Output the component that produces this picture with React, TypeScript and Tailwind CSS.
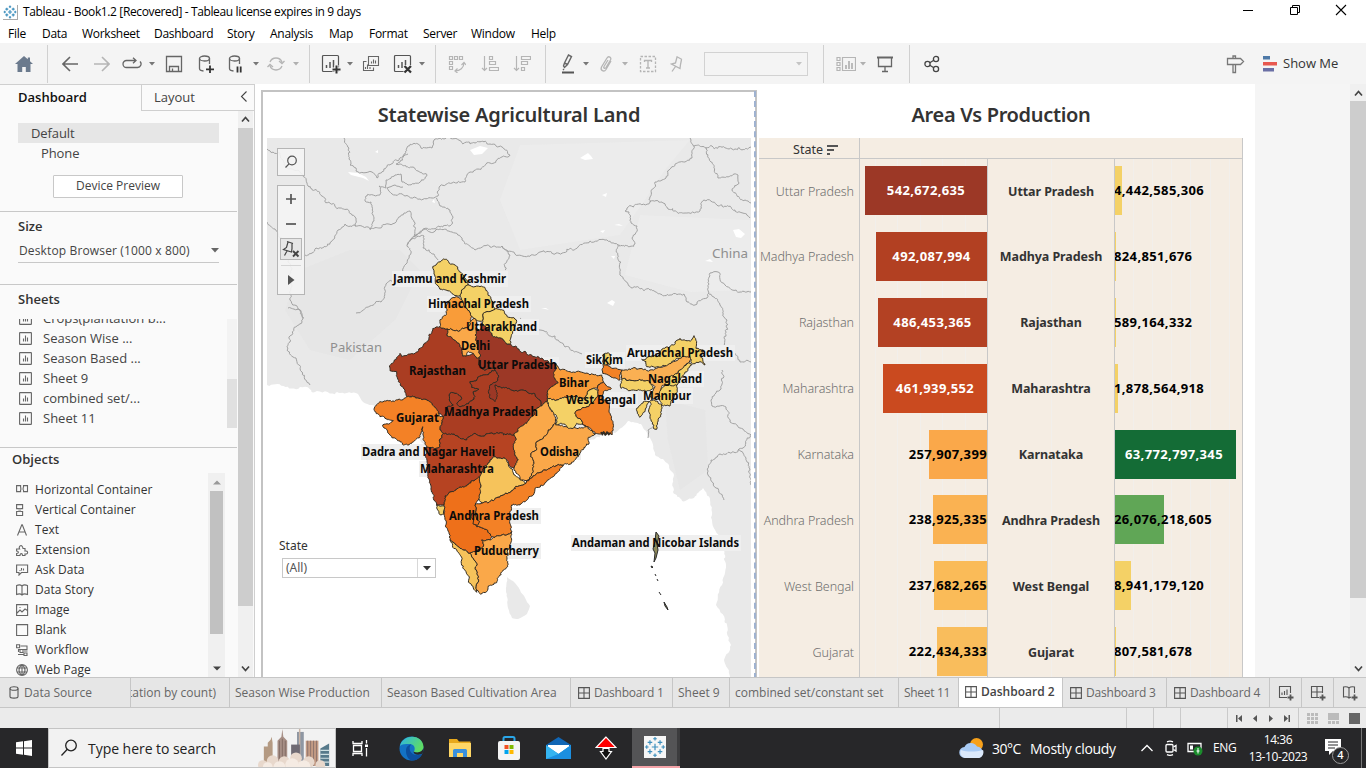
import React from "react";

/* ---------- map geometry ---------- */
type Pt = [number, number];

const parse = (s: string): Pt[] => s.trim().split(/\s+/).map((p) => p.split(",").map(Number) as Pt);

const hash = (a: Pt, b: Pt) => {
  const v = Math.sin((a[0] + b[0]) * 12.9898 + (a[1] + b[1]) * 78.233) * 43758.5453;
  return (v - Math.floor(v)) * 2 - 1;
};

// Midpoint displacement; the hash is symmetric so neighbours share their borders.
// The factor grows with depth, which keeps long edges in place and small ones jagged.
const split = (a: Pt, b: Pt, min: number, k: number, depth = 0): Pt[] => {
  const dx = b[0] - a[0];
  const dy = b[1] - a[1];
  if (depth > 6 || Math.hypot(dx, dy) < min) return [b];
  const flip = a[0] + a[1] * 0.37 > b[0] + b[1] * 0.37 ? -1 : 1;
  const h = hash(a, b) * k * flip;
  const m: Pt = [(a[0] + b[0]) / 2 - dy * h, (a[1] + b[1]) / 2 + dx * h];
  const next = Math.min(k * 1.6, 0.32);
  return [...split(a, m, min, next, depth + 1), ...split(m, b, min, next, depth + 1)];
};

const rough = (s: string, closed = true, min = 6, k = 0.22) => {
  const pts = parse(s);
  const out: Pt[] = [pts[0]];
  const n = closed ? pts.length : pts.length - 1;
  for (let i = 0; i < n; i++) out.push(...split(pts[i], pts[(i + 1) % pts.length], min, k));
  return "M" + out.map((p) => p[0].toFixed(1) + " " + p[1].toFixed(1)).join("L") + (closed ? "Z" : "");
};

const states: [string, string][] = [
  ["#aa3d22", "218,236 240,230 262,237 262,258 275,262 290,275 305,300 308,318 318,318 340,310 358,322 356,345 370,358 405,360 370,375 330,395 335,412 357,418 340,425 345,440 325,462 300,470 290,460 305,445 290,430 270,430 268,450 280,465 262,470 258,490 250,500 235,490 225,472 205,452 190,448 165,440 140,440 135,420 115,395 110,365 90,362 88,348 105,330 120,310 125,320 145,312 165,310 190,285 215,250"],
  ["#aa3d22", "405,360 415,375 410,395 405,405 430,412 455,420 490,420 520,430 540,450 545,468 530,475 515,500 500,520 475,535 462,555 430,555 390,550 360,558 345,550 320,570 300,565 275,552 250,550 240,530 250,500 258,490 262,470 280,465 268,450 270,430 290,430 305,445 290,460 300,470 325,462 345,440 340,425 357,418 335,412 330,395 370,375"],
  ["#9c3826", "358,240 368,225 385,240 400,260 425,265 440,282 470,290 515,315 550,328 585,340 587,365 585,385 595,398 575,410 562,428 562,455 545,468 540,450 520,430 490,420 455,420 430,412 405,405 412,430 405,455 390,445 385,425 390,405 410,395 415,375 405,360 370,358 356,345 358,322 362,318 350,275 348,235"],
  ["#f4d166", "250,27 262,30 268,40 285,45 298,65 312,78 325,105 305,120 300,138 285,137 268,122 240,118 226,100 222,72 218,50 236,36"],
  ["#f4d166", "325,105 345,110 365,108 382,125 395,150 405,178 385,185 370,190 368,212 352,212 335,200 318,175 305,150 300,138 305,120"],
  ["#f4d166", "405,178 430,180 440,195 470,215 458,250 452,280 440,282 425,265 400,260 385,240 368,225 368,212 370,190 385,185"],
  ["#f99c39", "290,140 305,150 318,175 335,200 332,212 325,235 300,242 262,237 240,230 240,215 262,180 258,170 270,150"],
  ["#faa849", "262,237 300,242 325,235 332,212 345,205 350,215 348,235 350,275 362,318 350,325 340,310 325,305 318,318 308,318 305,300 290,275 275,262 262,258"],
  ["#f38126", "140,440 165,440 190,448 205,452 225,472 240,500 250,500 240,530 250,550 238,570 240,590 228,595 200,595 195,580 188,530 180,560 155,580 130,585 90,555 68,525 100,512 85,508 60,500 42,478 45,470 60,455 95,455 125,450"],
  ["#b64322", "250,550 275,552 300,565 320,570 345,550 360,558 390,550 430,555 462,555 468,565 460,590 465,615 475,630 468,640 462,655 450,650 445,635 440,630 402,620 390,630 385,640 372,655 365,668 358,685 345,690 320,708 295,715 280,725 255,738 252,765 230,765 220,745 210,700 203,650 198,595 228,595 240,590 238,570"],
  ["#ee701a", "252,765 255,738 280,725 295,715 320,708 345,690 358,680 362,700 358,745 345,765 348,790 340,810 350,830 370,835 395,860 390,870 365,870 370,890 345,905 330,910 300,895 285,882 270,870 262,835 252,792"],
  ["#f3cf66", "230,765 252,768 252,792 243,795"],
  ["#f6c35b", "390,630 402,620 440,630 447,650 465,675 485,690 498,700 460,718 430,735 400,752 365,760 358,735 358,690 365,668"],
  ["#faa849", "500,520 515,500 530,475 545,468 562,455 585,500 585,520 565,540 550,565 530,575 530,595 512,620 522,640 520,665 500,692 480,690 462,655 468,640 475,630 465,615 460,590 468,565 462,555 475,535"],
  ["#faa849", "585,520 610,530 650,535 680,528 705,552 685,562 687,582 655,620 610,645 580,648 555,660 530,670 500,692 520,665 522,640 512,620 530,595 530,575 550,565 565,540"],
  ["#f38126", "345,765 365,760 400,752 430,735 460,718 498,700 500,692 530,670 555,660 580,648 610,645 590,670 560,695 525,715 520,735 490,755 480,765 455,765 450,785 450,810 455,845 440,855 405,862 395,860 370,835 350,830 340,810 348,790"],
  ["#faa849", "455,845 440,855 405,862 390,870 365,870 370,890 345,905 330,910 340,925 350,940 345,955 355,980 350,1020 362,1033 380,1025 385,1008 410,998 412,985 430,960 443,950 440,920 452,880"],
  ["#f6c35b", "270,870 285,882 300,895 330,910 340,925 350,940 345,955 355,980 350,1020 350,1027 330,1000 318,965 305,930 290,900"],
  ["#f99c39", "585,340 600,360 630,365 670,368 690,375 725,375 730,395 712,415 700,415 670,445 630,440 600,445 562,445 562,428 575,410 595,398 585,385"],
  ["#f4d166", "562,445 600,445 630,440 670,445 700,415 715,420 712,440 695,460 665,475 645,490 655,505 680,530 650,520 640,535 625,535 610,522 587,525 590,500 575,480"],
  ["#f38126", "645,490 665,475 695,460 712,440 715,420 712,415 730,395 740,408 754,415 730,425 725,445 745,460 750,490 755,510 756,555 746,548 740,553 730,545 722,552 705,552 680,530 655,505"],
  ["#f38126", "730,340 755,355 785,360 780,390 750,378 728,370"],
  ["#f4d166", "728,315 745,308 752,325 750,345 732,345"],
  ["#fab053", "785,360 830,358 870,360 910,350 940,335 980,315 995,325 985,340 960,360 940,380 925,390 905,410 900,435 885,445 870,440 885,410 870,395 865,392 830,392 785,388"],
  ["#f4d166", "785,388 830,392 865,392 880,415 865,422 820,420 783,415"],
  ["#f4d166", "845,328 890,320 910,295 940,285 960,265 995,270 1002,257 1010,275 1008,295 1030,300 1020,315 1035,345 1020,335 995,340 990,320 960,325 935,335 900,352 860,350 858,335"],
  ["#f4d166", "990,340 995,345 970,375 950,405 920,415 915,405 930,380 960,360"],
  ["#f4d166", "915,405 950,405 952,425 935,450 930,468 905,465 898,435 905,415"],
  ["#f4d166", "868,455 880,450 905,465 902,500 890,538 880,535 870,500"],
  ["#f4d166", "830,475 850,455 868,455 860,470 855,485 840,502 832,490"],
];

const coast = "267,385 300,387 340,393 358,394 363,402 372,405 420,440 450,470 500,440 560,425 590,440 615,433 628,421 641,424 650,438 655,455 667,463 674,475 673,492 682,501 694,498 703,488 710,500 712,520 720,540 726,565 722,585 716,605 727,625 731,645 724,660 730,677";

// Neighbouring countries' and provinces' borders.
const borders = [
  "344,138 349,148 350,165 356,168 356,171 372,172 377,178 390,165 404,154 408,146 418,144 432,148 434,140 444,139 470,144 490,144 502,147 510,155",
  "510,155 490,163 470,172 465,182 452,183 440,186 438,196 432,198 420,199 405,196 392,194 387,188 395,185 403,187",
  "408,154 400,162 396,164 413,167 418,171 427,175 420,182 408,185 402,182 401,174 395,175 386,180 386,188 379,186 381,193 366,196 365,201 371,202 373,215 374,221 370,230",
  "303,175 308,186 322,196 340,208 356,218 355,226 370,229 380,228 395,223 404,213 410,211 414,222 414,237 423,229 440,227 450,226 453,217 450,210 440,206 436,198",
  "303,256 312,253 316,248 331,242 338,230 345,224 356,226",
  "267,149 280,153 284,165 298,170 304,176",
  "267,222 275,229 284,240 288,262 290,300 300,310 304,318",
  "288,308 300,310 302,322 290,342 287,350 296,358 302,372 310,385",
  "356,313 370,306 381,302 385,290 386,284 398,278 406,264 411,253 407,245 413,237 425,229 430,232 440,229 452,232 462,240 475,250 490,247 502,246 510,255 505,270",
  "407,245 413,238 424,236 423,248 434,254 438,260",
  "502,246 515,254 528,256 540,252 556,253 578,247 590,241 605,240 618,245 635,244 632,238 637,226 631,223 629,212 625,211 650,202 655,182 666,178 671,168 680,162 692,158 694,146 690,138",
  "650,202 662,202 668,209 685,213 700,211 704,200 717,205 735,210 750,218",
  "694,146 712,146 735,149 751,147",
  "706,147 711,162 718,178 738,175 739,183 732,190 745,200 751,203",
  "618,245 621,262 620,273 628,284 650,290 670,295 684,294 687,302 695,305 707,298 709,284 710,273 718,272 725,285 740,292 751,292",
  "709,294 720,305 727,320 724,338 725,350 734,352 740,362 751,362",
  "520,318 540,330 555,336 565,347 582,354",
  "722,370 720,390 711,400 712,406 726,407 730,422 740,428 751,435",
  "751,434 738,450 720,454 711,460 708,475 716,488 724,500",
  "738,450 746,458 749,468 751,485",
  "648,438 648,430 652,428",
];

const lakes = "M470,150l10,-4 8,2 -6,6 -8,1zM348,172l10,1 8,4 3,4 -6,-3 -12,-3zM580,158l8,-5 3,3 2,3 -8,1zM733,230l6,-1 6,5 -4,4 -5,-1zM602,195l5,-2 -1,4zM614,225l5,-1 4,2zM600,231l5,-1 -2,3zM705,261l5,-2 3,3zM607,303l5,-3 3,2 -2,4zM541,308l5,0 3,2zM432,202l2,-3 1,4zM375,152l3,-2 0,3zM611,256l4,0 -1,3z";

const mapLabels: [string, number, number, number][] = [
  ["Jammu and Kashmir", 393, 279, 113],
  ["Himachal Pradesh", 428, 304, 101],
  ["Uttarakhand", 466, 327, 71],
  ["Delhi", 461, 346, 29],
  ["Uttar Pradesh", 478, 365, 79],
  ["Rajasthan", 409, 371, 57],
  ["Madhya Pradesh", 444, 412, 94],
  ["Gujarat", 396, 418, 43],
  ["Bihar", 559, 383, 30],
  ["West Bengal", 566, 400, 70],
  ["Sikkim", 586, 360, 37],
  ["Arunachal Pradesh", 627, 353, 106],
  ["Nagaland", 648, 379, 54],
  ["Manipur", 643, 396, 48],
  ["Odisha", 540, 452, 39],
  ["Dadra and Nagar Haveli", 362, 452, 133],
  ["Maharashtra", 420, 469, 74],
  ["Andhra Pradesh", 449, 516, 90],
  ["Puducherry", 474, 551, 65],
  ["Andaman and Nicobar Islands", 572, 543, 167],
];

function IndiaMap() {
  return (
    <svg width="484" height="539" viewBox="267 138 484 539" className="block">
      <rect x="267" y="138" width="484" height="539" fill="#fff" />
      <g fill="#e9e9e9">
        <path d={rough(coast, false, 3, 0.08) + "L760 677 760 130 260 130 260 385Z"} />
        <path d={rough("507,577 513,581 520,590 530,606 527,614 518,619 512,618 508,608 506,592", true, 3, 0.05)} />
      </g>
      <g fill="#e3e3e3" opacity=".45">
        <path d="M300,270L350,250 400,250 420,270 395,320 350,360 310,350 285,310z" />
        <path d="M665,400L705,410 708,470 680,490 668,440z" />
      </g>
      <g fill="#eeeeee" opacity=".6">
        <path d="M520,145L690,140 665,170 645,200 620,235 520,250 500,200z" />
        <path d="M640,215L750,220 751,290 690,292 625,275z" />
      </g>
      <path d={lakes} fill="#fff" />
      <g fill="none" stroke="#a2a2a2" strokeWidth="1">
        {borders.map((b) => (
          <path key={b} d={rough(b, false, 2.2, 0.12)} />
        ))}
      </g>
      <g fill="#efefef">
        {mapLabels.map(([t, x, y, w]) => (
          <rect key={t} x={x - 1} y={y - 8} width={w + 3} height="16" />
        ))}
      </g>
      <g transform="translate(360 250) scale(.33333)" stroke="#332c22" strokeWidth="3" strokeLinejoin="round">
        {states.map(([fill, pts]) => (
          <path key={pts} d={rough(pts, true, 6, 0.12)} fill={fill} />
        ))}
        <path d="M335,790l12,6 4,14 8,4 -6,12 -14,-4 2,-12 -8,-8z" fill="#ee701a" />
        <path d="M723,546l4,8 4,-8 5,9 5,-9 5,8 6,-6" fill="none" strokeWidth="5" />
      </g>
      <g stroke="#2a2a2a" strokeWidth="1" fill="#8f8a5a">
        <path d="M656,532l3,4 -2,8 1,6 -2,8 -2,4 1,-9 -2,-4 2,-8z" />
        <path d="M651,566l2,1 -1,1zM655,574l1,2M657,579l1,2M659,592l2,3M664,602l3,5 1,3 -3,-4z" />
      </g>
      <g fontFamily="'Noto Sans','Open Sans',sans-serif" fontSize="13" fill="#8f8f8f">
        <text x="712" y="258" textLength="36" lengthAdjust="spacingAndGlyphs">China</text>
        <text x="330" y="352" textLength="52" lengthAdjust="spacingAndGlyphs">Pakistan</text>
      </g>
      <g fontFamily="'Noto Sans','Open Sans',sans-serif" fontSize="11.500" fontWeight="700" fill="#0b0b0b">
        {mapLabels.map(([t, x, y, w]) => (
          <text key={t} x={x} y={y + 4} textLength={w} lengthAdjust="spacingAndGlyphs">{t}</text>
        ))}
      </g>
    </svg>
  );
}

/* ---------- icons ---------- */
function Ico({ children, c = "#666", w = 20, h = 20, sw = 1.3 }: { children: React.ReactNode; c?: string; w?: number; h?: number; sw?: number }) {
  return (
    <svg width={w} height={h} viewBox={`0 0 ${w} ${h}`} fill="none" stroke={c} strokeWidth={sw} className="block shrink-0">
      {children}
    </svg>
  );
}

const Caret = ({ c = "#777" }: { c?: string }) => (
  <svg width="6" height="4" viewBox="0 0 6 4" className="block shrink-0"><path d="M0 0h6L3 3.5z" fill={c} /></svg>
);

const Slot = ({ cls, children }: { cls: string; children: React.ReactNode }) => (
  <div className={"flex h-full shrink-0 items-center justify-center " + cls}>{children}</div>
);

const Sep = ({ cls = "" }: { cls?: string }) => <div className={"h-[38px] w-px shrink-0 bg-[#d0d0d0] " + cls} />;

const Bars = ({ c }: { c: string }) => (
  <>
    <rect x="2.5" y="1.5" width="16" height="16" rx="1" stroke={c} strokeWidth="1.2" />
    <path d="M6.5 14v-3M10 14V8M13.5 14V6" stroke={c} strokeWidth="1.5" />
  </>
);

function Toolbar() {
  const g = "#b5b5b5";
  return (
    <div className="flex h-[41px] shrink-0 items-center bg-[#f4f4f4]">
      <Slot cls="w-[47px]">
        <svg width="18" height="16" viewBox="0 0 18 16"><path d="M9 0 0 8h2.5v8h4.7v-5h3.6v5h4.7V8H18l-3-2.7V1.5h-2.2v1.8z" fill="#6b7a8d" /></svg>
      </Slot>
      <Sep />
      <Slot cls="ml-[6px] w-[32px]"><Ico w={16} h={16} sw={1.6}><path d="M8 1 1 8l7 7M1 8h15" /></Ico></Slot>
      <Slot cls="w-[32px]"><Ico w={16} h={16} sw={1.6} c={g}><path d="M8 1l7 7-7 7M15 8H0" /></Ico></Slot>
      <Slot cls="w-[28px]"><Ico w={20} h={14}><path d="M13.500 3.500h-9a3.500 3.500 0 0 0 0 7h11a3.500 3.500 0 0 0 2.500-6M11 .8l3 2.700-3 2.700" /></Ico></Slot>
      <Slot cls="w-[12px]"><Caret /></Slot>
      <Slot cls="w-[32px]"><Ico w={18} h={18}><path d="M1.500 1.500h15v15h-15zM4.500 16.500v-5h9v5M7.500 13.500v2.500" /></Ico></Slot>
      <Slot cls="w-[32px]"><Ico w={18} h={18}><ellipse cx="7.500" cy="3.500" rx="5" ry="2.500" /><path d="M2.500 3.500v10c0 1.300 2 2.300 4 2.500M12.500 3.500V9" /><path d="M13 10.500v7.500M9 14.300h8" stroke="#333" strokeWidth="1.800" /></Ico></Slot>
      <Slot cls="w-[28px]"><Ico w={18} h={18}><ellipse cx="7.500" cy="3.500" rx="5" ry="2.500" /><path d="M2.500 3.500v10c0 1.300 2 2.300 4 2.500M12.500 3.500V9" /><path d="M10.500 11.500v6M13.700 11.500v6" stroke="#333" strokeWidth="1.800" /></Ico></Slot>
      <Slot cls="w-[12px]"><Caret /></Slot>
      <Slot cls="w-[28px]"><Ico w={18} h={16} c={g}><path d="M3 6a6.500 6.500 0 0 1 12 0M15 10a6.500 6.500 0 0 1-12 0M0.500 11l2.500-2.500L6 11M12 5l3 2.500 2.500-2.500" /></Ico></Slot>
      <Slot cls="w-[12px]"><Caret c="#b0b0b0" /></Slot>
      <Sep cls="ml-[7px]" />
      <Slot cls="ml-[6px] w-[28px]"><Ico w={21} h={20}><Bars c="#555" /><path d="M16.500 11v9M12 15.500h9" stroke="#f4f4f4" strokeWidth="4" /><path d="M16.500 11.500v8M12.500 15.500h8" stroke="#333" strokeWidth="2" /></Ico></Slot>
      <Slot cls="w-[12px]"><Caret /></Slot>
      <Slot cls="w-[30px]"><Ico w={18} h={18}><path d="M6.500 1.500h10v9h-10zM9.500 8.500v-2M11.500 8.500v-4M13.500 8.500v-3M4.500 6.500h-3v9h10v-3M3.500 14v-2M5.500 14V9.500M8 14v-2" strokeWidth="1.100" /></Ico></Slot>
      <Slot cls="ml-[2px] w-[28px]"><Ico w={21} h={20}><Bars c="#555" /><path d="M11.500 11h9v8h-9z" fill="#f4f4f4" stroke="none" /><path d="m12.500 12 6.500 6.500M19 12l-6.500 6.500" stroke="#333" strokeWidth="2.200" /></Ico></Slot>
      <Slot cls="w-[12px]"><Caret /></Slot>
      <Sep cls="ml-[7px]" />
      <Slot cls="ml-[5px] w-[32px]"><Ico w={18} h={18} c={g}><path d="M1.500 1.500h3v3h-3zM6.500 1.500h3v3h-3zM11.500 1.500h3v3h-3zM1.500 6.500h3v3h-3zM1.500 11.500h3v3h-3zM7 16c5 0 9-3 9-8.500M9.500 13.500L7 16l2.500 2M13.500 10L16 7.500l2 2.500" strokeWidth="1.200" /></Ico></Slot>
      <Slot cls="w-[33px]"><Ico w={18} h={18} c={g}><path d="M3.500 1v14M1 13l2.500 2.500L6 13M8.500 1.500h3v3h-3zM8.500 6.500h6v3h-6zM8.500 12.500h9v3h-9z" strokeWidth="1.200" /></Ico></Slot>
      <Slot cls="w-[32px]"><Ico w={18} h={18} c={g}><path d="M3.500 1v14M1 13l2.500 2.500L6 13M8.500 1.500h9v3h-9zM8.500 6.500h6v3h-6zM8.500 12.500h3v3h-3z" strokeWidth="1.200" /></Ico></Slot>
      <Sep cls="ml-[7px]" />
      <Slot cls="ml-[8px] w-[28px]"><Ico w={14} h={20}><path d="m2.500 12 1-3 4-8 3 1.500-4 8-3 3zM3.500 9l3 1.500M3 15l-1 1" strokeWidth="1.400" /><path d="M1 18.500h12" stroke="#555" strokeWidth="2" /></Ico></Slot>
      <Slot cls="w-[8px]"><Caret /></Slot>
      <Slot cls="w-[31px]"><Ico w={14} h={18} c={g}><path d="M12 6 7 14.500C5 17.500 1 15.500 2.500 12L8 3c1.500-2.500 5-.5 3.500 2L7 12.500c-1 1.500-3 .5-2-1L9 5" /></Ico></Slot>
      <Slot cls="w-[8px]"><Caret c="#b0b0b0" /></Slot>
      <Slot cls="w-[37px]"><Ico w={18} h={18} c={g}><path d="M1.500 1.500h15v15h-15z" strokeDasharray="2.500 1.500" /><path d="M5.500 7V5.500h7V7M9 5.500v7.500M7 13h4" /></Ico></Slot>
      <Slot cls="w-[22px]"><Ico w={14} h={18} c={g}><path d="M6.500 1.500 12 4.500M7 2 5.500 8 1.500 9l8.500 4.500.5-4L11.500 4.500M5.500 11.500 2 16.500" /></Ico></Slot>
      <div className="ml-[16px] flex h-[24px] w-[104px] items-center justify-end border border-[#d2d2d2] pr-[5px]"><Caret c="#c4c4c4" /></div>
      <Sep cls="ml-[15px]" />
      <Slot cls="ml-[9px] w-[26px]"><Ico w={20} h={16} c={g}><path d="M1 1.500h3v3H1zM1 6.500h3v3H1zM1 11.500h3v3H1zM6.500 1.500h13v13h-13z" strokeWidth="1.200" /><path d="M10 13v-4M13 13V5M16 13V7" strokeWidth="1.800" /></Ico></Slot>
      <Slot cls="w-[8px]"><Caret c="#b0b0b0" /></Slot>
      <Slot cls="w-[36px]"><Ico w={18} h={18}><path d="M1 2.500h16" strokeWidth="2" /><path d="M2.500 3v8.500h13V3M9 11.500V16M6 16.500h6" /></Ico></Slot>
      <Sep cls="ml-[6px]" />
      <Slot cls="ml-[6px] w-[32px]"><Ico w={16} h={18} c="#444" sw={1.300}><circle cx="3.500" cy="9" r="2.600" /><circle cx="12" cy="4" r="2.600" /><circle cx="12" cy="14" r="2.600" /><path d="m5.800 7.700 4-2.400M5.800 10.300l4 2.400" /></Ico></Slot>
      <div className="ml-auto flex h-full items-center pr-[28px]">
        <Ico w={20} h={20} c="#777"><path d="M2.500 4.500h13l3 3-3 3h-13zM8 4V2h2.500v2M8 11v7.500h2.500V11" /></Ico>
        <svg width="15" height="16" viewBox="0 0 15 16" className="ml-[17px]"><path d="M1 0h7v3.500H1z" fill="#4e79a7" /><path d="M1 6h14v3.500H1z" fill="#e8584f" /><path d="M1 12h11v3.500H1z" fill="#6a6fa5" /></svg>
        <span className="ml-[6px] w-[55px] text-[13px] whitespace-nowrap text-[#333]">Show Me</span>
      </div>
    </div>
  );
}

/* ---------- left panel ---------- */
const SheetIcon = () => (
  <Ico w={13} h={13} c="#666" sw={1.100}><rect x=".6" y=".6" width="11.800" height="11.800" rx=".5" /><path d="M4.500 9.500v-3M6.500 9.500v-6M8.500 9.500v-4" /></Ico>
);

const objects: [string, React.ReactNode][] = [
  ["Horizontal Container", <><path d="M.6 1.600h4v6h-4zM7.500 1.600h4v6h-4z" /><path d="M4.600 3.500h3v2.500h-3z" fill="#bbb" stroke="none" /></>],
  ["Vertical Container", <><path d="M.6 .6h6v4h-6zM.6 7.500h6v4h-6z" /><path d="M2.300 4.800h2.700v2.400H2.300z" fill="#bbb" stroke="none" /></>],
  ["Text", <path d="M1.500 11.500 5.800.8h.5l4.200 10.700M3 8h6" />],
  ["Extension", <path d="M.6 5h3C2 2 6.500-.5 7 4.500h2V7c3.500-.5 3.500 3.500 0 3v1.500H6.500C6.500 9 4 9 4 11.500H.6V9.500C3 9.500 3 7 .6 7z" />],
  ["Ask Data", <path d="M.6 1h11v7.500H5.500L3 11V8.500H.6zM3.500 6.500h1M5.500 6.500V4M7.500 6.500v-2" />],
  ["Data Story", <path d="M.6 1.500C3 .5 5 1 6 2c1-1 3-1.500 5.500-.5v9C9 9.500 7 10 6 11c-1-1-3-1.500-5.400-.5zM6 2v9" />],
  ["Image", <path d="M.6 .6h11v11H.6zM1 9l3-3 2 2 3-3 2.500 1.500M3.500 3.500h1" />],
  ["Blank", <path d="M.6 .6h11v11H.6z" />],
  ["Workflow", <path d="M4.500 2h7M.6.8h3v3h-3zM11 2v3.500H2.500V8M4 5.500h3v3H4zM8 7h3.500M2 10.500h3M8 9h3v2.500H8zM5 10.500h3" />],
  ["Web Page", <path d="M6 .6a5.400 5.400 0 1 0 0 10.800A5.400 5.400 0 0 0 6 .6zM6 .6c-4 3-4 8 0 10.800M6 .6c4 3 4 8 0 10.800M1 4h10M1 8h10M6 .6v10.800" />],
];

function SidePanel() {
  return (
    <div className="flex h-full w-[255px] shrink-0 flex-col border-t border-r border-[#cfcfcf] bg-[#fafafa] text-[#444]">
      <div className="flex h-[26px] shrink-0">
        <div className="w-[141px] pt-[3px] pl-[18px] text-[13px] leading-[19px] font-semibold text-[#111]">Dashboard</div>
        <div className="flex flex-1 justify-between border-b border-l border-[#cfcfcf] pr-[6px] pl-[12px] text-[13px] leading-[24px]">
          Layout
          <Ico w={8} h={24} c="#444" sw={1.100}><path d="M6.500 6.500 1.500 11.500l5 5" /></Ico>
        </div>
      </div>
      <div className="flex min-h-0 flex-1">
        <div className="flex w-[238px] flex-col overflow-hidden pr-px">
          <div className="h-[101px] shrink-0 border-b border-[#c8c8c8] pt-[12px] pl-[18px] text-[13px] leading-[20px] tracking-[-0.1px]">
            <div className="w-[201px] bg-[#e6e6e6] pl-[13px]">Default</div>
            <div className="pl-[23px]">Phone</div>
            <div className="mt-[12px] ml-[35px] h-[23px] w-[130px] rounded-[1px] border border-[#c8c8c8] bg-white text-center text-[12px] leading-[20px] tracking-normal">Device Preview</div>
          </div>
          <div className="h-[73px] shrink-0 border-b border-[#c8c8c8] pl-[18px]">
            <div className="pt-[5px] text-[13px] leading-[19px] font-semibold text-[#333]">Size</div>
            <div className="mt-[3px] flex h-[24px] w-[201px] items-center justify-between border-b border-[#c8c8c8] text-[12px]">
              <span className="pl-px tracking-[0.14px]">Desktop Browser (1000 x 800)</span>
              <svg width="8" height="5" viewBox="0 0 8 5"><path d="M0 0h8L4 4.500z" fill="#666" /></svg>
            </div>
          </div>
          <div className="h-[163px] shrink-0 border-b border-[#c8c8c8]">
            <div className="h-[34px] pt-[5px] pl-[18px] text-[13px] leading-[19px] font-semibold text-[#333]">Sheets</div>
            <div className="flex h-[109px] justify-between overflow-hidden">
              <div className="-mt-[11px] text-[13px] leading-[20px]">
                {["Crops(plantation b...", "Season Wise ...", "Season Based ...", "Sheet 9", "combined set/...", "Sheet 11"].map((s) => (
                  <div key={s} className="flex h-[20px] items-center gap-[11px] pl-[19px]"><SheetIcon />{s}</div>
                ))}
              </div>
              <div className="w-[10px] bg-[#f3f3f3] pt-[60px]"><div className="h-[49px] bg-[#e0e0e0]" /></div>
            </div>
          </div>
          <div className="pt-[2px] pl-[12px] text-[13px] leading-[19px] font-semibold text-[#333]">Objects</div>
          <div className="mt-[4px] flex min-h-0 flex-1 justify-between overflow-hidden pr-[12px]">
            <div className="pt-[7px] text-[12px] leading-[20px] text-[#333]">
              {objects.map(([s, icon]) => (
                <div key={s} className="flex h-[20px] items-center gap-[6px] pl-[16px] tracking-[0.05px]">
                  <Ico w={13} h={12} c="#666" sw={1.100}>{icon}</Ico>{s}
                </div>
              ))}
            </div>
            <div className="flex w-[17px] flex-col items-center justify-between bg-[#f0f0f0] pt-[7px] pb-[6px]">
              <svg width="8" height="5" viewBox="0 0 8 5"><path d="M0 4.500h8L4 .5z" fill="#999" /></svg>
              <div className="mb-[27px] h-[143px] w-[13px] bg-[#c1c1c1]" />
              <svg width="8" height="5" viewBox="0 0 8 5"><path d="M0 .5h8L4 4.500z" fill="#444" /></svg>
            </div>
          </div>
        </div>
        <div className="flex w-[15px] flex-col items-center bg-[#f0f0f0]">
          <div className="flex h-[17px] items-center"><Ico w={9} h={7} c="#444" sw={1.700}><path d="m1 5.500 3.500-4 3.500 4" /></Ico></div>
          <div className="h-[478px] w-full bg-[#cdcdcd]" />
          <div className="mt-auto flex h-[17px] items-center"><Ico w={9} h={7} c="#444" sw={1.700}><path d="m1 1.500 3.500 4 3.500-4" /></Ico></div>
        </div>
      </div>
    </div>
  );
}

/* ---------- area vs production ---------- */
type Row = { n: string; a: string; aw: number; ac: string; p: string; pw: number; pc: string };
const rows: Row[] = [
  { n: "Uttar Pradesh", a: "542,672,635", aw: 122, ac: "#9c3826", p: "4,442,585,306", pw: 7, pc: "#f4d166" },
  { n: "Madhya Pradesh", a: "492,087,994", aw: 111, ac: "#b24022", p: "824,851,676", pw: 1, pc: "#f4d166" },
  { n: "Rajasthan", a: "486,453,365", aw: 109, ac: "#b34123", p: "589,164,332", pw: 1, pc: "#f4d166" },
  { n: "Maharashtra", a: "461,939,552", aw: 104, ac: "#ca4a1f", p: "1,878,564,918", pw: 3, pc: "#f4d166" },
  { n: "Karnataka", a: "257,907,399", aw: 58, ac: "#faa84a", p: "63,772,797,345", pw: 121, pc: "#146c36" },
  { n: "Andhra Pradesh", a: "238,925,335", aw: 54, ac: "#fab252", p: "26,076,218,605", pw: 49, pc: "#60a656" },
  { n: "West Bengal", a: "237,682,265", aw: 53, ac: "#fabb58", p: "8,941,179,120", pw: 16, pc: "#f4d166" },
  { n: "Gujarat", a: "222,434,333", aw: 50, ac: "#f9bd5c", p: "807,581,678", pw: 1, pc: "#f4d166" },
];

const Grid = ({ xs }: { xs: number[] }) => (
  <svg className="absolute inset-0" width="128" height="519"><path d={xs.map((x) => `M${x} 0V519`).join("")} stroke="#f2efeb" strokeWidth="1" /></svg>
);

function AreaChart() {
  const num = "text-[13px] leading-[49px] font-bold tracking-[0.36px] whitespace-nowrap";
  return (
    <div className="flex h-full w-[498px] flex-col bg-white">
      <div className="flex h-[54px] w-[488px] shrink-0 items-center justify-center pt-[7px] font-['Noto_Sans','Open_Sans',sans-serif] text-[20px] font-semibold tracking-[-0.33px] text-[#333]">Area Vs Production</div>
      <div className="ml-[2px] flex min-h-0 w-[484px] flex-1 flex-col border-r border-[#c8c8c8] bg-[#f5ede3] font-['Noto_Sans','Open_Sans',sans-serif]">
        <div className="flex h-[21px] shrink-0 border-b border-[#c8c8c8]">
          <div className="flex w-[101px] items-center justify-end gap-[4px] border-r border-[#c8c8c8] pt-[4px] pr-[21px] text-[12.500px] text-[#333]">
            State
            <svg width="11" height="11" viewBox="0 0 11 11"><path d="M0 1h11M0 5h7M0 9h3" stroke="#555" strokeWidth="2" /></svg>
          </div>
        </div>
        <div className="flex min-h-0 flex-1 overflow-hidden">
          <div className="w-[101px] shrink-0 border-r border-[#c8c8c8]">
            {rows.map((r) => (
              <div key={r.n} className="flex h-[65.9px] items-center justify-end pr-[5px] text-[12.500px] font-light tracking-[-0.05px] whitespace-nowrap text-[#6e6e6e]">{r.n}</div>
            ))}
          </div>
          <div className="relative w-[128px] shrink-0 overflow-hidden border-r border-[#c8c8c8]">
            <Grid xs={[15.5, 37.5, 60.5, 82.5, 105.5]} />
            {rows.map((r, i) => (
              <div key={r.n} className="relative flex h-[65.9px] items-start justify-end pt-[7px]">
                <div className={"flex h-[49px] " + (i < 4 ? "justify-center text-white " : "justify-end text-black ") + num} style={{ width: r.aw, background: r.ac }}>{r.a}</div>
              </div>
            ))}
          </div>
          <div className="relative w-[127px] shrink-0 border-r border-[#c8c8c8]">
            <Grid xs={[63.5]} />
            {rows.map((r) => (
              <div key={r.n} className="relative flex h-[65.9px] items-center justify-center text-[12.500px] font-bold tracking-[-0.08px] whitespace-nowrap text-[#333]">{r.n}</div>
            ))}
          </div>
          <div className="relative w-[127px] shrink-0 overflow-hidden">
            <Grid xs={[18.5, 37.5, 56.5, 75.5, 95.5, 114.5]} />
            {rows.map((r) => (
              <div key={r.n} className="relative flex h-[65.9px] items-start pt-[7px]">
                <div className={"flex h-[49px] " + (r.pw > 100 ? "justify-center pr-[3px] text-white " : "text-black ") + num} style={{ width: r.pw, background: r.pc }}><span className={r.pw > 100 ? "" : "-ml-px"}>{r.p}</span></div>
              </div>
            ))}
          </div>
        </div>
      </div>
    </div>
  );
}

/* ---------- bottom bars ---------- */
const GridIcon = () => (
  <Ico w={12} h={12} c="#555" sw={1.100}><path d="M.6.6h10.800v10.800H.6zM6 .6v10.800M.6 6h10.800" /></Ico>
);

const Tab = ({ cls, children }: { cls: string; children: React.ReactNode }) => (
  <div className={"flex h-full shrink-0 items-center overflow-hidden border-r border-[#c6c6c6] whitespace-nowrap " + cls}>{children}</div>
);

function SheetTabs() {
  return (
    <div className="flex h-[31px] shrink-0 border-t border-b border-[#c6c6c6] bg-[#e6e6e6] text-[12px] text-[#666]">
      <Tab cls="w-[131px] gap-[5px] pl-[9px]"><Ico w={10} h={13} c="#555" sw={1.100}><ellipse cx="5" cy="2.500" rx="4" ry="1.800" /><path d="M1 2.500v8c0 2.200 8 2.200 8 0v-8" /></Ico>Data Source</Tab>
      <Tab cls="w-[99px] justify-end pr-[13px]">(plantation by count)</Tab>
      <Tab cls="w-[152px] pl-[5px]">Season Wise Production</Tab>
      <Tab cls="w-[189px] pl-[5px]">Season Based Cultivation Area</Tab>
      <Tab cls="w-[102px] gap-[4px] pl-[7px] tracking-[-0.2px]"><GridIcon />Dashboard 1</Tab>
      <Tab cls="w-[57px] pl-[5px]">Sheet 9</Tab>
      <Tab cls="w-[169px] pl-[5px]">combined set/constant set</Tab>
      <Tab cls="w-[60px] pl-[5px] tracking-[-0.3px]">Sheet 11</Tab>
      <Tab cls="w-[104px] gap-[4px] bg-white pb-[2px] pl-[6px] font-semibold text-[#444]"><GridIcon />Dashboard 2</Tab>
      <Tab cls="w-[104px] gap-[4px] pl-[7px] tracking-[-0.2px]"><GridIcon />Dashboard 3</Tab>
      <Tab cls="w-[103px] gap-[4px] pl-[7px] tracking-[-0.15px]"><GridIcon />Dashboard 4</Tab>
      <Tab cls="w-[32px] justify-center"><Ico w={16} h={16} c="#555" sw={1.100}><path d="M12.500 8V1.500h-11v11H9M4 10V7.500M6.500 10V6M9 10V4.500" /><path d="M12.500 9.500v6M9.500 12.500h6" strokeWidth="1.800" /></Ico></Tab>
      <Tab cls="w-[32px] justify-center"><Ico w={16} h={16} c="#555" sw={1.100}><path d="M12.500 8V1.500h-11v11H9M7 1.500v11M1.500 7h11" /><path d="M12.500 9.500v6M9.500 12.500h6" strokeWidth="1.800" /></Ico></Tab>
      <Tab cls="w-[33px] justify-center"><Ico w={16} h={16} c="#555" sw={1.100}><path d="M12.500 8V2C10 1.500 8 2 7 3 6 2 4 1.500 1.500 2v10C4 11.500 6 12 7 13l2-1M7 3v10" /><path d="M12.500 9.500v6M9.500 12.500h6" strokeWidth="1.800" /></Ico></Tab>
    </div>
  );
}

function StatusBar() {
  return (
    <div className="flex h-[20px] shrink-0 bg-[#ebebeb]">
      <div className="w-[1000px] border-r border-[#cacaca]" />
      <div className="w-[127px] border-r border-[#cacaca]" />
      <div className="w-[27px] border-r border-[#cacaca]" />
      <div className="w-[27px] border-r border-[#cacaca]" />
      <div className="w-[47px] border-r border-[#cacaca]" />
      <div className="flex w-[71px] items-center justify-between border-r border-[#cacaca] px-[8px]">
        <svg width="6" height="7"><path d="M0 0h1.500v7H0zM6 0v7L2 3.500z" fill="#555" /></svg>
        <svg width="4" height="7"><path d="M4 0v7L0 3.500z" fill="#555" /></svg>
        <svg width="4" height="7"><path d="M0 0v7l4-3.500z" fill="#555" /></svg>
        <svg width="6" height="7"><path d="M4.500 0H6v7H4.500zM0 0v7l4-3.500z" fill="#555" /></svg>
      </div>
      <div className="flex flex-1 items-center gap-[10px] pl-[8px]">
        <svg width="11" height="11"><path d="M0 0h3v3H0zM4 0h3v3H4zM8 0h3v3H8zM0 4h3v3H0zM4 4h3v3H4zM8 4h3v3H8zM0 8h3v3H0zM4 8h3v3H4zM8 8h3v3H8z" fill="#bbb" /></svg>
        <svg width="11" height="11"><path d="M0 0h11v7H0zM0 8h3v3H0zM4 8h3v3H4zM8 8h3v3H8z" fill="#bbb" /></svg>
        <svg width="11" height="11"><path d="M0 0h11v11H0z" fill="#666" /></svg>
      </div>
    </div>
  );
}

const TableauMark = ({ s, sw = 1 }: { s: number; sw?: number }) => (
  <svg width={s} height={s} viewBox="0 0 24 24" className="block" fill="none" stroke="#3d8fbd" strokeWidth={1.3 * sw}>
    <path d="M12 8.500v7M8.500 12h7M6.500 4.500v5M4 7h5M17.500 4.500v5M15 7h5M6.500 14.500v5M4 17h5M17.500 14.500v5M15 17h5M12 1v4M10 3h4M12 19v4M10 21h4M1 12h4M3 10v4M19 12h4M21 10v4" />
  </svg>
);

function City() {
  return (
    <svg width="76" height="38" viewBox="0 0 78 39">
      <path d="M10 14l3-3 1-3 1 6v24h-5zM6 18h8v20H6z" fill="#b49a83" />
      <path d="M20 12l4-4 1-8 1 8 4 4v26H20z" fill="#a78f86" />
      <path d="M22 12v26M25 10v28M28 12v26" stroke="#7a655e" strokeWidth=".8" />
      <path d="M40 3h7v35h-7z" fill="#8f97a3" /><path d="M42 0h1.500v38H42z" fill="#c9b4a6" />
      <path d="M34 16h9v22h-9z" fill="#6f6a73" />
      <path d="M49 12h13v26H49z" fill="#c39b84" /><path d="M51 12v26M54 12v26M57 12v26M60 12v26" stroke="#7f6a67" strokeWidth=".8" />
      <path d="M64 20l9-5v23h-9z" fill="#56798a" /><path d="M64 22h9M64 26h9M64 30h9M64 34h9" stroke="#cfe0e2" strokeWidth="1.200" />
      <g fill="#e8d8cc"><circle cx="5" cy="37" r="5" /><circle cx="15" cy="33" r="6" /><circle cx="27" cy="34" r="6" /><circle cx="39" cy="30" r="6" /><circle cx="52" cy="34" r="6" /><circle cx="64" cy="37" r="5" /></g>
      <g fill="#f5ebe3"><circle cx="10" cy="39" r="5" /><circle cx="22" cy="39" r="6" /><circle cx="35" cy="37" r="7" /><circle cx="47" cy="39" r="7" /></g>
    </svg>
  );
}

function Taskbar() {
  return (
    <div className="flex h-[40px] shrink-0 bg-[#272729] font-['Open_Sans','Noto_Sans',sans-serif] text-white">
      <Slot cls="w-[48px]"><svg width="16" height="16" viewBox="0 0 16 16"><path d="M0 2.300 7 1.300v6.200H0zM8 1.200 16 0v7.500H8zM0 8.500h7v6.200l-7-1zM8 8.500h8V16l-8-1.200z" fill="#fff" /></svg></Slot>
      <div className="flex w-[288px] items-center border border-[#c4c4c4] bg-[#f2f2f2] pl-[11px] text-[14px] text-[#222]">
        <Ico w={18} h={18} c="#222" sw={1.300}><circle cx="11" cy="6.500" r="5.300" /><path d="M7.300 10.300 1.500 16.500" /></Ico>
        <span className="ml-[10px] w-[129px] tracking-[-0.04px] whitespace-nowrap">Type here to search</span>
        <div className="mr-px ml-auto self-end"><City /></div>
      </div>
      <Slot cls="w-[48px]"><Ico w={17} h={17} c="#fff"><path d="M1 1v2.500h9V1M1 16v-2.500h9V16M1.500 5.500h8v6h-8zM14.500 0v3.500M14.500 8v8.500" /><path d="M13 4.500h3v2.500h-3z" fill="#fff" stroke="none" /></Ico></Slot>
      <Slot cls="w-[54px]">
        <svg width="25" height="25" viewBox="0 0 25 25">
          <defs>
            <linearGradient id="eg" x1="0" y1="0" x2="1" y2="0.500"><stop offset="0" stopColor="#2cb5e8" /><stop offset="1" stopColor="#5fdc62" /></linearGradient>
          </defs>
          <circle cx="12.500" cy="12.500" r="12" fill="#1372c4" />
          <path d="M1 10C3-2 24-3 24.500 11c0 5-6 7-10 5 2-2 2-8-4-8C6 8 3 8 1 10z" fill="url(#eg)" />
          <path d="M7 15c0-4 2-6 5-6.500C9 12 11 18 17 19c3 .5 5-.5 6-1-2 5-7 7-11 6.500C9 23 7 19 7 15z" fill="#0c4f9e" />
          <path d="M14.500 15.500c4 2 9 .5 10-3.500 0 2-.3 4-1 5.500-3 2-9 1.500-9-2z" fill="#272729" />
        </svg>
      </Slot>
      <Slot cls="w-[43px]"><svg width="22" height="20" viewBox="0 0 22 20"><path d="M0 1h8l2 2.500h11.500V19H0z" fill="#e8a91c" /><path d="M0 5h22v14H0z" fill="#ffd766" /><path d="M4 19v-6.500q0-1.500 1.500-1.500h11q1.500 0 1.500 1.500V19h-4v-4H8v4z" fill="#3a90dc" /></svg></Slot>
      <Slot cls="w-[55px]"><svg width="24" height="25" viewBox="0 0 24 25"><path d="M6.500 6V2.500Q6.500 1 8 1h8q1.500 0 1.500 1.500V6" fill="none" stroke="#2aa6e8" strokeWidth="2" /><rect x="1" y="5" width="22" height="19" rx="2" fill="#f4f4f4" /><path d="M7.500 9h4v4h-4z" fill="#f25022" /><path d="M12.500 9h4v4h-4z" fill="#7fba00" /><path d="M7.500 14h4v4h-4z" fill="#00a4ef" /><path d="M12.500 14h4v4h-4z" fill="#ffb900" /></svg></Slot>
      <Slot cls="w-[44px]"><svg width="25" height="22" viewBox="0 0 25 22"><path d="M0 8 12.500 0 25 8v14H0z" fill="#1066b5" /><path d="M2 8h21v2L12.500 17 2 10z" fill="#fff" /><path d="M0 8l12.500 9L25 8v14H0z" fill="#35b4f0" /><path d="M0 22 L12.500 17 25 8v14z" fill="#1c8fe0" /></svg></Slot>
      <Slot cls="w-[52px]"><svg width="22" height="24" viewBox="0 0 22 24"><path d="M11 1 1 11.500h20z" fill="#f00" stroke="#fff" strokeWidth="1.200" /><path d="M8 12.500h6v3h2.500L11 23l-5.500-7.500H8z" fill="#111" stroke="#fff" strokeWidth="1.200" /></svg></Slot>
      <div className="flex h-full w-[45px] items-center justify-center border-b-2 border-[#f4a3a8] bg-[#545456]"><div className="bg-[#f6f6f6]"><TableauMark s={22} /></div></div>
      <div className="h-full w-[3px] border-b-2 border-[#f4a3a8] bg-[#3c3c3e]" />
      <div className="ml-auto flex h-full items-center text-[14px] whitespace-nowrap">
        <svg width="26" height="22" viewBox="0 0 26 22"><circle cx="17.500" cy="7.500" r="6.500" fill="#f7a11b" /><path d="M6 21a5.500 5.500 0 0 1-.5-11A7 7 0 0 1 18 9.500 6 6 0 0 1 20 21z" fill="#a9cbf5" /><path d="M6 21a5.500 5.500 0 0 1-4-8c6 2 14 2 22 0a6 6 0 0 1-4 8z" fill="#dbe9fb" /></svg>
        <span className="ml-[7px] w-[38px] tracking-[-0.5px]">30°C</span>
        <span className="w-[110px] tracking-[-0.3px]">Mostly cloudy</span>
        <Ico w={14} h={8} c="#fff"><path d="m1.500 7 5.500-5.500L12.500 7" /></Ico>
        <div className="ml-[10px]"><Ico w={14} h={16} c="#fff"><rect x="2" y="4.500" width="7" height="7.500" rx="1" /><path d="M9.500 7 12 5.500v5.500L9.500 9.500M3 1.800c2-1 4-1 6 0M3 14.600c2 1 4 1 6 0" /></Ico></div>
        <div className="ml-[9px]"><Ico w={16} h={16} c="#fff"><path d="M1 3.500h13v8H1z" /><path d="M3 5.500h3v4H3z" fill="#fff" stroke="none" /><circle cx="11" cy="11" r="4.500" fill="#1b8c2c" stroke="none" /><path d="M11 8v5.500M9.500 11h3" strokeWidth="1" /></Ico></div>
        <span className="ml-[10px] w-[28px] text-[12px] tracking-[-0.4px]">ENG</span>
        <div className="ml-[2px] w-[70px] pb-px text-center text-[12px] leading-[17px] tracking-[-0.4px]">14:36<br />13-10-2023</div>
        <div className="ml-[12px] h-full w-[28px] pt-[10px]">
          <div className="relative">
            <svg width="17" height="18" viewBox="0 0 17 18"><path d="M0 1h16v12H8l-4 4v-4H0z" fill="#fff" /><path d="M3 4h10M3 7h10M3 10h7" stroke="#272729" /></svg>
            <div className="absolute top-[9px] left-[7px] flex size-[17px] items-center justify-center rounded-full border border-[#999] bg-[#272729] text-[11px] font-semibold">4</div>
          </div>
        </div>
        <div className="mr-[4px] ml-[8px] h-full w-px bg-[#777]" />
      </div>
    </div>
  );
}

/* ---------- page ---------- */
const menus: [string, string][] = [
  ["File", "w-[34px]"], ["Data", "w-[40px]"], ["Worksheet", "w-[72px]"], ["Dashboard", "w-[73px]"], ["Story", "w-[43px]"], ["Analysis", "w-[59px]"],
  ["Map", "w-[40px]"], ["Format", "w-[54px]"], ["Server", "w-[48px]"], ["Window", "w-[60px]"], ["Help", "w-[40px]"],
];

export default function App() {
  return (
    <div className="flex h-[768px] w-[1366px] flex-col overflow-hidden bg-white font-['Open_Sans','Noto_Sans',sans-serif]">
      <div className="flex h-[24px] shrink-0 items-center pl-[3px] text-[12px] text-black">
        <div className="border-r border-b border-[#aaa]"><TableauMark s={14} sw={1.500} /></div>
        <span className="ml-[5px] tracking-[-0.37px]">Tableau - Book1.2 [Recovered] - Tableau license expires in 9 days</span>
        <div className="ml-auto flex items-center pr-[19px] pb-[4px]">
          <Ico w={10} h={12} c="#000" sw={1}><path d="M0 6.500h10" /></Ico>
          <div className="ml-[36px]"><Ico w={12} h={12} c="#000" sw={1}><path d="M1.500 3.500h7v7h-7zM3.500 3.500v-2h7v7h-2" /></Ico></div>
          <div className="ml-[34px]"><Ico w={12} h={12} c="#000" sw={1.100}><path d="m1 1 10 10M11 1 1 11" /></Ico></div>
        </div>
      </div>
      <div className="flex h-[19px] shrink-0 items-center pl-[8px] text-[12px] tracking-[-0.28px] text-black">
        {menus.map(([m, w]) => (
          <span key={m} className={w}>{m}</span>
        ))}
      </div>
      <Toolbar />
      <div className="flex min-h-0 flex-1">
        <SidePanel />
        <div className="flex flex-1 overflow-hidden bg-white pt-[6px] pl-[6px]">
          <div className="relative flex w-[496px] shrink-0 flex-col border-t-2 border-r-2 border-l-2 border-[#c3c3c3] pl-[4px]">
            <div className="flex h-[46px] shrink-0 items-center justify-center pr-[4px] pb-px font-['Noto_Sans','Open_Sans',sans-serif] text-[20px] font-semibold tracking-[-0.19px] text-[#333]">Statewise Agricultural Land</div>
            <IndiaMap />
            <div className="absolute -top-px -right-[1px] h-[588px] border-r-2 border-dashed border-[#9fb2d0]" />
            <div className="absolute top-[56px] left-[14px] flex size-[28px] items-center justify-center border border-[#b5b5b5] bg-[#f4f4f4]/90">
              <Ico w={14} h={14} c="#555" sw={1.200}><circle cx="8" cy="5.500" r="4.300" /><path d="M5 8.800 1.500 12.500" /></Ico>
            </div>
            <div className="absolute top-[93px] left-[14px] flex h-[110px] w-[28px] flex-col items-center border border-[#b5b5b5] bg-[#f4f4f4]/90">
              <div className="flex h-[26px] items-center"><Ico w={10} h={10} c="#555" sw={1.700}><path d="M5 0v10M0 5h10" /></Ico></div>
              <div className="flex h-[24px] items-center"><Ico w={10} h={4} c="#555" sw={1.700}><path d="M0 2h10" /></Ico></div>
              <div className="mt-[2px] flex h-[22px] w-[22px] items-center justify-center border border-[#b5b5b5] bg-[#e6e6e6]">
                <Ico w={18} h={18} c="#444" sw={1.200}><path d="m5 1.500 6 2M6 2 4.500 7.500 1.500 9.500l8 2.500.5-3.500L10 3M5 11l-2.500 4.500" /><path d="m11 11 5.500 5.500M16.500 11 11 16.500" strokeWidth="1.900" /></Ico>
              </div>
              <div className="mt-[5px] h-px w-[20px] bg-[#d5d5d5]" />
              <div className="flex flex-1 items-center"><svg width="7" height="10"><path d="M0 0v10l6.500-5z" fill="#555" /></svg></div>
            </div>
            <div className="absolute top-[447px] left-[16px] w-[158px] font-['Noto_Sans','Open_Sans',sans-serif] text-[12px] text-[#333]">
              <div className="h-[19px] leading-[14px]">State</div>
              <div className="ml-[3px] flex h-[20px] w-[154px] items-center border border-[#c8c8c8] bg-white pl-[3px] text-[#555]">
                (All)
                <div className="ml-auto flex h-full w-[18px] items-center justify-center border-l border-[#d8d8d8]"><svg width="8" height="5"><path d="M0 0h8L4 4.500z" fill="#333" /></svg></div>
              </div>
            </div>
          </div>
          <div className="-mt-[6px] h-[593px]"><AreaChart /></div>
          <div className="-mt-[6px] h-[593px] w-[95px] bg-[#f5f5f5]" />
        </div>
        <div className="flex w-[16px] shrink-0 flex-col items-center bg-[#f0f0f0]">
          <div className="flex h-[17px] items-center pt-[2px]"><Ico w={9} h={7} c="#444" sw={1.700}><path d="m1 5.500 3.500-4 3.500 4" /></Ico></div>
          <div className="h-[497px] w-full bg-[#cdcdcd]" />
          <div className="mt-auto flex h-[17px] items-center"><Ico w={9} h={7} c="#444" sw={1.700}><path d="m1 1.500 3.500 4 3.500-4" /></Ico></div>
        </div>
      </div>
      <SheetTabs />
      <StatusBar />
      <Taskbar />
    </div>
  );
}
